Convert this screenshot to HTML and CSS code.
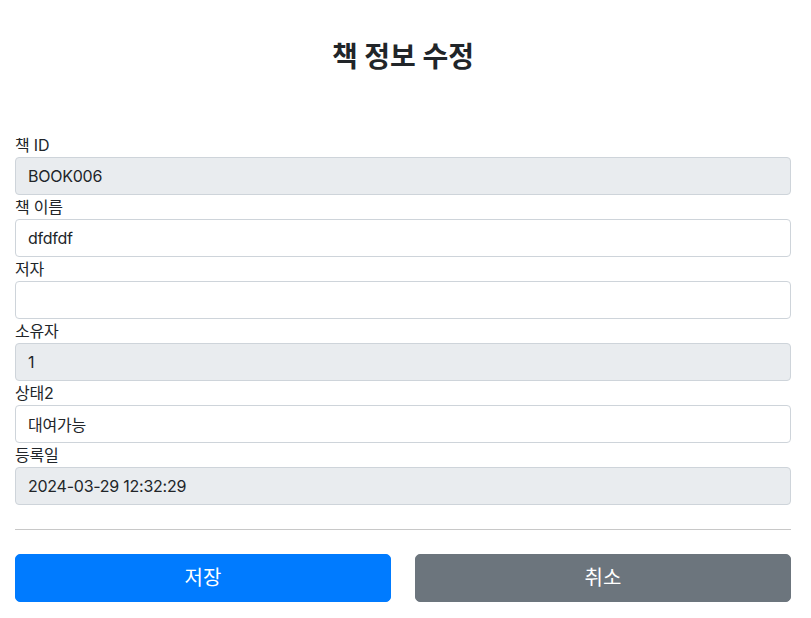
FILE: index.html
```html
<!DOCTYPE html>
<html lang="ko">
<head>
<meta charset="utf-8">
<title>책 정보 수정</title>
<link rel="stylesheet" href="styles.css">
</head>
<body>
<div class="container">
  <h2 class="title">책 정보 수정</h2>
  <form class="form">
    <div class="group">
      <label class="label">책 ID</label>
      <input class="input readonly" type="text" value="BOOK006" readonly>
    </div>
    <div class="group">
      <label class="label">책 이름</label>
      <input class="input" type="text" value="dfdfdf">
    </div>
    <div class="group">
      <label class="label">저자</label>
      <input class="input" type="text" value="">
    </div>
    <div class="group">
      <label class="label">소유자</label>
      <input class="input readonly" type="text" value="1" readonly>
    </div>
    <div class="group">
      <label class="label">상태2</label>
      <input class="input" type="text" value="대여가능">
    </div>
    <div class="group">
      <label class="label">등록일</label>
      <input class="input readonly" type="text" value="2024-03-29 12:32:29" readonly>
    </div>
    <hr class="divider">
    <div class="actions">
      <button type="button" class="btn btn-primary">저장</button>
      <button type="button" class="btn btn-secondary">취소</button>
    </div>
  </form>
</div>
</body>
</html>
```
FILE: styles.css
```css
* { box-sizing: border-box; }
html, body { margin: 0; padding: 0; background: #fff; }
body {
  font-family: Inter, "Noto Sans CJK KR", sans-serif;
  font-size: 16px;
  line-height: 1.5;
  color: #212529;
}
.container { padding: 0 20px 0 15px; }
.title {
  margin: 40px 0 59px;
  font-size: 28px;
  line-height: 34px;
  font-weight: 700;
  text-align: center;
  color: #212529;
}
.form { display: flex; flex-direction: column; }
.group { display: flex; flex-direction: column; }
.label { display: block; line-height: 24px; height: 24px; letter-spacing: -0.2px; }
.input {
  display: block;
  width: 100%;
  height: 38px;
  padding: 6px 12px;
  font-family: inherit;
  font-size: 16px;
  line-height: 24px;
  letter-spacing: -0.25px;
  color: #212529;
  background: #fff;
  border: 1px solid #ced4da;
  border-radius: 4px;
  outline: none;
}
.input.readonly { background: #e9ecef; }
.divider {
  margin: 24px 0 24px;
  border: 0;
  border-top: 1px solid #c8c8c8;
  height: 0;
}
.actions { display: grid; grid-template-columns: 1fr 1fr; gap: 24px; }
.btn {
  height: 48px;
  border: 1px solid transparent;
  border-radius: 5px;
  font-family: inherit;
  font-size: 20px;
  line-height: 30px;
  font-weight: 400;
  color: #fff;
  cursor: pointer;
}
.btn-primary { background: #007bff; border-color: #007bff; }
.btn-secondary { background: #6c757d; border-color: #6c757d; }
```
